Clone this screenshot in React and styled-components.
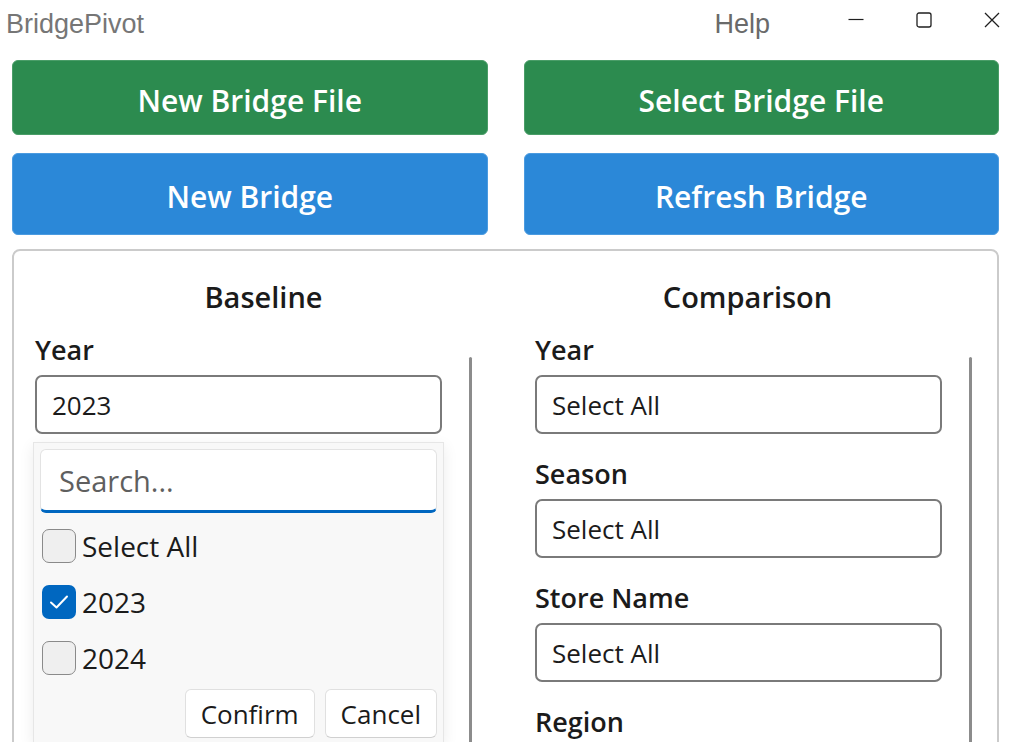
import React from "react";
import styled, { createGlobalStyle } from "styled-components";

const GlobalStyle = createGlobalStyle`
  html, body {
    margin: 0;
    padding: 0;
    background: #ffffff;
  }
  body {
    font-family: "Open Sans", "Noto Sans", sans-serif;
    color: #1b1b1b;
  }
`;

const Window = styled.div`
  width: 1015px;
  height: 742px;
  overflow: hidden;
  background: #ffffff;
`;

const TitleBar = styled.div`
  height: 48px;
  display: flex;
  align-items: center;
  font-family: "Liberation Sans", Arial, sans-serif;
  font-size: 27px;
  color: #767676;
`;

const AppName = styled.div`
  padding-left: 6px;
  flex: 1;
`;

const HelpMenu = styled.div`
  color: #6a6a6a;
  margin-right: 78px;
`;

const WinControls = styled.div`
  align-self: flex-start;
  display: flex;
  gap: 52px;
  padding: 12px 15px 0 0;
  color: #1f1f1f;
`;

const ButtonGrid = styled.div`
  display: grid;
  grid-template-columns: 1fr 1fr;
  column-gap: 36px;
  row-gap: 18px;
  padding: 12px 16px 0 12px;
`;

const ActionButton = styled.button`
  height: ${(p) => p.$height}px;
  border: 1px solid ${(p) => p.$edge};
  border-radius: 6px;
  background: ${(p) => p.$bg};
  color: #ffffff;
  font-family: "Open Sans", "Noto Sans", sans-serif;
  font-weight: 600;
  font-size: 30px;
  padding: 5px 0 0 0;
`;

const Panel = styled.div`
  margin: 14px 16px 0 12px;
  height: 600px;
  border: 2px solid #cbcbcb;
  border-radius: 8px;
  padding: 28px 0 0 21px;
  display: grid;
  grid-template-columns: 437px 437px;
  column-gap: 63px;
  align-items: start;
`;

const Column = styled.div`
  display: flex;
  flex-direction: column;
`;

const ColumnTitle = styled.div`
  font-weight: 600;
  font-size: 29px;
  line-height: 36px;
  text-align: center;
  padding-left: ${(p) => p.$padLeft || 0}px;
  padding-right: ${(p) => p.$padRight || 0}px;
  margin-bottom: 19px;
  color: #1b1b1b;
`;

const ScrollArea = styled.div`
  display: flex;
  align-items: flex-start;
  height: 420px;
`;

const Fields = styled.div`
  width: 407px;
  display: flex;
  flex-direction: column;
`;

const ScrollTrack = styled.div`
  margin-left: 27px;
  padding-top: 23px;
  align-self: stretch;
  display: flex;
`;

const ScrollThumb = styled.div`
  width: 3px;
  border-radius: 2px;
  background: #8c8c8c;
  flex: 1;
`;

const Field = styled.div`
  display: flex;
  flex-direction: column;
  margin-bottom: 24px;
`;

const Label = styled.div`
  font-weight: 600;
  font-size: 27px;
  line-height: 32px;
  margin-bottom: 9px;
  color: #1b1b1b;
`;

const SelectBox = styled.div`
  height: 59px;
  box-sizing: border-box;
  border: 2px solid #7a7a7a;
  border-radius: 7px;
  padding-left: 15px;
  display: flex;
  align-items: center;
  font-size: 26px;
  color: #1b1b1b;
  background: #ffffff;
`;

const Popup = styled.div`
  margin: 8px 0 0 -2px;
  width: 411px;
  box-sizing: border-box;
  background: #f8f8f8;
  border: 1px solid #e6e6e6;
  box-shadow: 0 4px 14px rgba(0, 0, 0, 0.08);
  padding: 6px 6px 4px 6px;
`;

const SearchBox = styled.div`
  height: 64px;
  box-sizing: border-box;
  background: #ffffff;
  border: 1px solid #e3e3e3;
  border-bottom: 3px solid #0067c0;
  border-radius: 6px;
  padding-left: 18px;
  display: flex;
  align-items: center;
  font-size: 29px;
  color: #5f5f5f;
`;

const OptionList = styled.div`
  padding-top: 5px;
`;

const OptionRow = styled.div`
  height: 56px;
  display: flex;
  align-items: center;
  gap: 6px;
  padding-left: 2px;
  font-size: 28px;
  color: #1b1b1b;
`;

const CheckBox = styled.div`
  width: 34px;
  height: 34px;
  box-sizing: border-box;
  border-radius: 7px;
  border: ${(p) => (p.$checked ? "none" : "1.5px solid #8a8a8a")};
  background: ${(p) => (p.$checked ? "#0067c0" : "#efefef")};
  display: flex;
  align-items: center;
  justify-content: center;
`;

const PopupActions = styled.div`
  display: flex;
  justify-content: flex-end;
  gap: 10px;
  margin-top: 3px;
`;

const PopupButton = styled.button`
  height: 49px;
  padding: 0 15px;
  background: #ffffff;
  border: 1px solid #e0e0e0;
  border-bottom-color: #d0d0d0;
  border-radius: 6px;
  font-family: "Open Sans", "Noto Sans", sans-serif;
  font-size: 26px;
  color: #1b1b1b;
`;

const Minimize = () => (
  <svg width="16" height="16" viewBox="0 0 16 16">
    <line x1="0.5" y1="7.5" x2="15.5" y2="7.5" stroke="currentColor" strokeWidth="1.2" />
  </svg>
);

const Maximize = () => (
  <svg width="16" height="16" viewBox="0 0 16 16">
    <rect x="1" y="1" width="14" height="14" rx="2" fill="none" stroke="currentColor" strokeWidth="1.3" />
  </svg>
);

const Close = () => (
  <svg width="16" height="16" viewBox="0 0 16 16">
    <path d="M1 1 L15 15 M15 1 L1 15" stroke="currentColor" strokeWidth="1.3" fill="none" />
  </svg>
);

const Check = () => (
  <svg width="24" height="24" viewBox="0 0 24 24">
    <path d="M4 12.5 L9.5 17.5 L20 6.5" stroke="#ffffff" strokeWidth="2" fill="none" strokeLinecap="round" strokeLinejoin="round" />
  </svg>
);

const comparisonFields = [
  { name: "Year", value: "Select All" },
  { name: "Season", value: "Select All" },
  { name: "Store Name", value: "Select All" },
  { name: "Region" },
];

const App = () => {
  return (
    <Window>
      <GlobalStyle />
      <TitleBar>
        <AppName>BridgePivot</AppName>
        <HelpMenu>Help</HelpMenu>
        <WinControls>
          <Minimize />
          <Maximize />
          <Close />
        </WinControls>
      </TitleBar>

      <ButtonGrid>
        <ActionButton $height={75} $bg="#2c8b4f" $edge="#4a9d68">
          New Bridge File
        </ActionButton>
        <ActionButton $height={75} $bg="#2c8b4f" $edge="#4a9d68">
          Select Bridge File
        </ActionButton>
        <ActionButton $height={82} $bg="#2b88d8" $edge="#4b9be0">
          New Bridge
        </ActionButton>
        <ActionButton $height={82} $bg="#2b88d8" $edge="#4b9be0">
          Refresh Bridge
        </ActionButton>
      </ButtonGrid>

      <Panel>
        <Column>
          <ColumnTitle $padLeft={20}>Baseline</ColumnTitle>
          <ScrollArea>
            <Fields>
              <Label>Year</Label>
              <SelectBox>2023</SelectBox>
              <Popup>
                <SearchBox>Search...</SearchBox>
                <OptionList>
                  <OptionRow>
                    <CheckBox />
                    Select All
                  </OptionRow>
                  <OptionRow>
                    <CheckBox $checked>
                      <Check />
                    </CheckBox>
                    2023
                  </OptionRow>
                  <OptionRow>
                    <CheckBox />
                    2024
                  </OptionRow>
                </OptionList>
                <PopupActions>
                  <PopupButton>Confirm</PopupButton>
                  <PopupButton>Cancel</PopupButton>
                </PopupActions>
              </Popup>
            </Fields>
            <ScrollTrack>
              <ScrollThumb />
            </ScrollTrack>
          </ScrollArea>
        </Column>

        <Column>
          <ColumnTitle $padRight={12}>Comparison</ColumnTitle>
          <ScrollArea>
            <Fields>
              {comparisonFields.map((f) => (
                <Field key={f.name}>
                  <Label>{f.name}</Label>
                  {f.value && <SelectBox>{f.value}</SelectBox>}
                </Field>
              ))}
            </Fields>
            <ScrollTrack>
              <ScrollThumb />
            </ScrollTrack>
          </ScrollArea>
        </Column>
      </Panel>
    </Window>
  );
};

export default App;
